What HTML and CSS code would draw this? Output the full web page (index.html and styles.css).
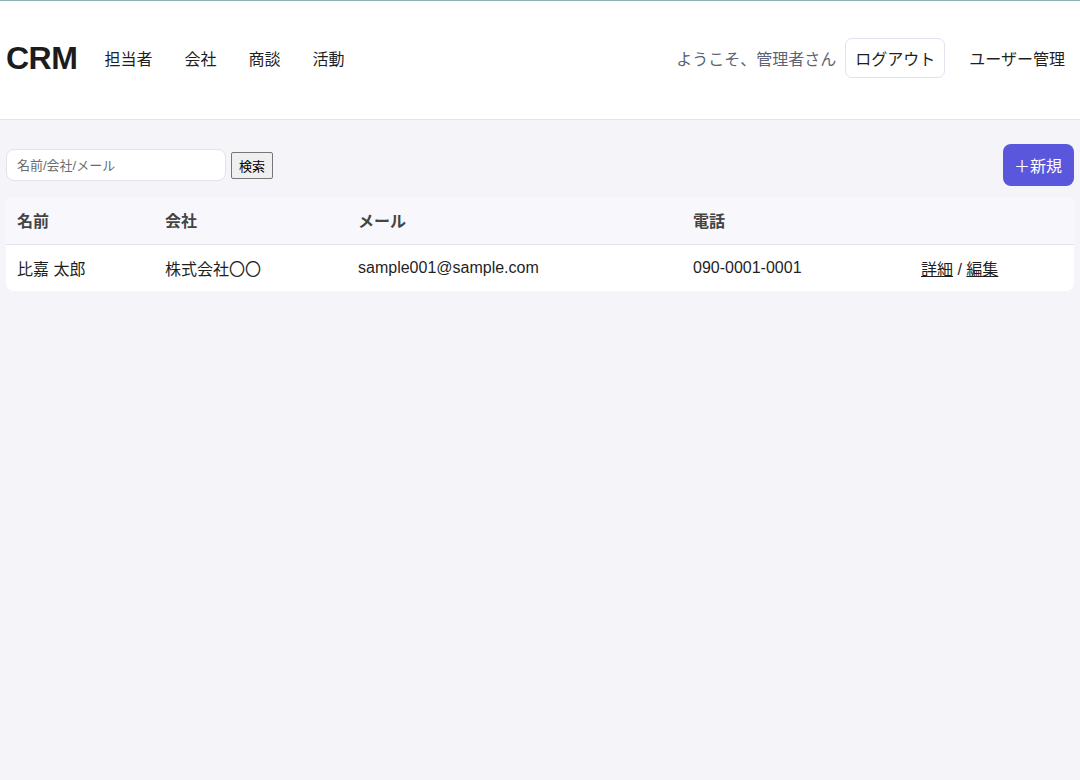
FILE: index.html
```html
<!DOCTYPE html>
<html lang="ja">
<head>
  <meta charset="UTF-8" />
  <meta name="viewport" content="width=device-width, initial-scale=1.0" />
  <title>CRM</title>
  <link rel="stylesheet" href="styles.css">
</head>

<body>
  <!-- Header -->
  <header class="site-header">
    <div class="header-left">
      <a class="brand" href="#">CRM</a>
      <nav class="main-nav">
        <a href="#">担当者</a>
        <a href="#">会社</a>
        <a href="#">商談</a>
        <a href="#">活動</a>
      </nav>
    </div>
    <div class="header-right">
      <span class="welcome">ようこそ、管理者さん</span>
      <button class="logout-btn">ログアウト</button>
      <a class="admin-link" href="#">ユーザー管理</a>
    </div>
  </header>

  <main class="content">
    <!-- Toolbar -->
    <div class="toolbar">
      <form class="search-form">
        <input type="text" class="search-input" placeholder="名前/会社/メール">
        <button type="submit" class="search-btn">検索</button>
      </form>
      <a class="new-btn" href="#">＋新規</a>
    </div>

    <!-- Contacts table -->
    <div class="table-card">
      <table class="data-table">
        <thead>
          <tr>
            <th class="col-name">名前</th>
            <th class="col-company">会社</th>
            <th class="col-mail">メール</th>
            <th class="col-phone">電話</th>
            <th class="col-actions"></th>
          </tr>
        </thead>
        <tbody>
          <tr>
            <td>比嘉 太郎</td>
            <td>株式会社〇〇</td>
            <td>sample001@sample.com</td>
            <td>090-0001-0001</td>
            <td><a href="#">詳細</a> / <a href="#">編集</a></td>
          </tr>
        </tbody>
      </table>
    </div>
  </main>
</body>

</html>
```

FILE: styles.css
```css
:root {
  --bg-color: #f4f4f9;
  --card-bg: #ffffff;
  --primary: #5b57dc;
  --border: #e2e2ee;
  --text-dark: #1f1f1f;
  --text-muted: #5b6477;
}

* {
  margin: 0;
  padding: 0;
  box-sizing: border-box;
}

body {
  font-family: 'Liberation Sans', 'Noto Sans CJK JP', sans-serif;
  font-size: 16px;
  background-color: var(--bg-color);
  color: var(--text-dark);
}

a {
  color: inherit;
  text-decoration: none;
}

.site-header {
  height: 120px;
  background-color: var(--card-bg);
  border-top: 1px solid #8fb1b6;
  border-bottom: 1px solid var(--border);
  display: flex;
  align-items: center;
  justify-content: space-between;
  padding: 0 0 4px 6px;
}

.header-left {
  display: flex;
  align-items: center;
}

.brand {
  font-size: 32px;
  font-weight: bold;
  letter-spacing: -0.5px;
  color: #1c1c1c;
  margin-right: 27px;
}

.main-nav {
  display: flex;
  gap: 32px;
}

.header-right {
  display: flex;
  align-items: center;
}

.welcome {
  color: var(--text-muted);
  margin-right: 9px;
}

.logout-btn {
  font: inherit;
  color: var(--text-dark);
  background-color: var(--card-bg);
  border: 1px solid var(--border);
  border-radius: 7px;
  height: 40px;
  padding: 0 9px;
  cursor: pointer;
}

.admin-link {
  padding: 0 15px 0 24px;
}

.content {
  padding: 24px 6px;
}

.toolbar {
  display: flex;
  align-items: center;
  justify-content: space-between;
  margin-bottom: 11px;
}

.search-form {
  display: flex;
  align-items: center;
  gap: 5px;
}

.search-input {
  width: 220px;
  height: 32px;
  padding: 0 10px;
  font: inherit;
  font-size: 13px;
  border: 1px solid var(--border);
  border-radius: 8px;
  background-color: var(--card-bg);
}

.search-input::placeholder {
  color: #6b6b6b;
}

.search-btn {
  font-family: inherit;
  font-size: 13px;
  height: 27px;
  padding: 0 7px;
  background-color: #efefef;
  border: 1px solid #767676;
  border-radius: 2px;
  color: #000;
}

.new-btn {
  display: inline-flex;
  align-items: center;
  height: 42px;
  padding: 0 12px 0 11px;
  background-color: var(--primary);
  color: #fff;
  border-radius: 8px;
}

.table-card {
  background-color: var(--card-bg);
  border-radius: 8px;
  overflow: hidden;
}

.data-table {
  width: 100%;
  border-collapse: collapse;
}

.data-table th {
  text-align: left;
  font-weight: bold;
  color: #444;
  background-color: #f8f8fc;
  height: 47px;
  padding: 0 11px;
  border-bottom: 1px solid var(--border);
}

.data-table td {
  height: 47px;
  padding: 0 11px;
}

.data-table td a {
  text-decoration: underline;
}

.col-name { width: 148px; }
.col-company { width: 193px; }
.col-mail { width: 335px; }
.col-phone { width: 228px; }
```
